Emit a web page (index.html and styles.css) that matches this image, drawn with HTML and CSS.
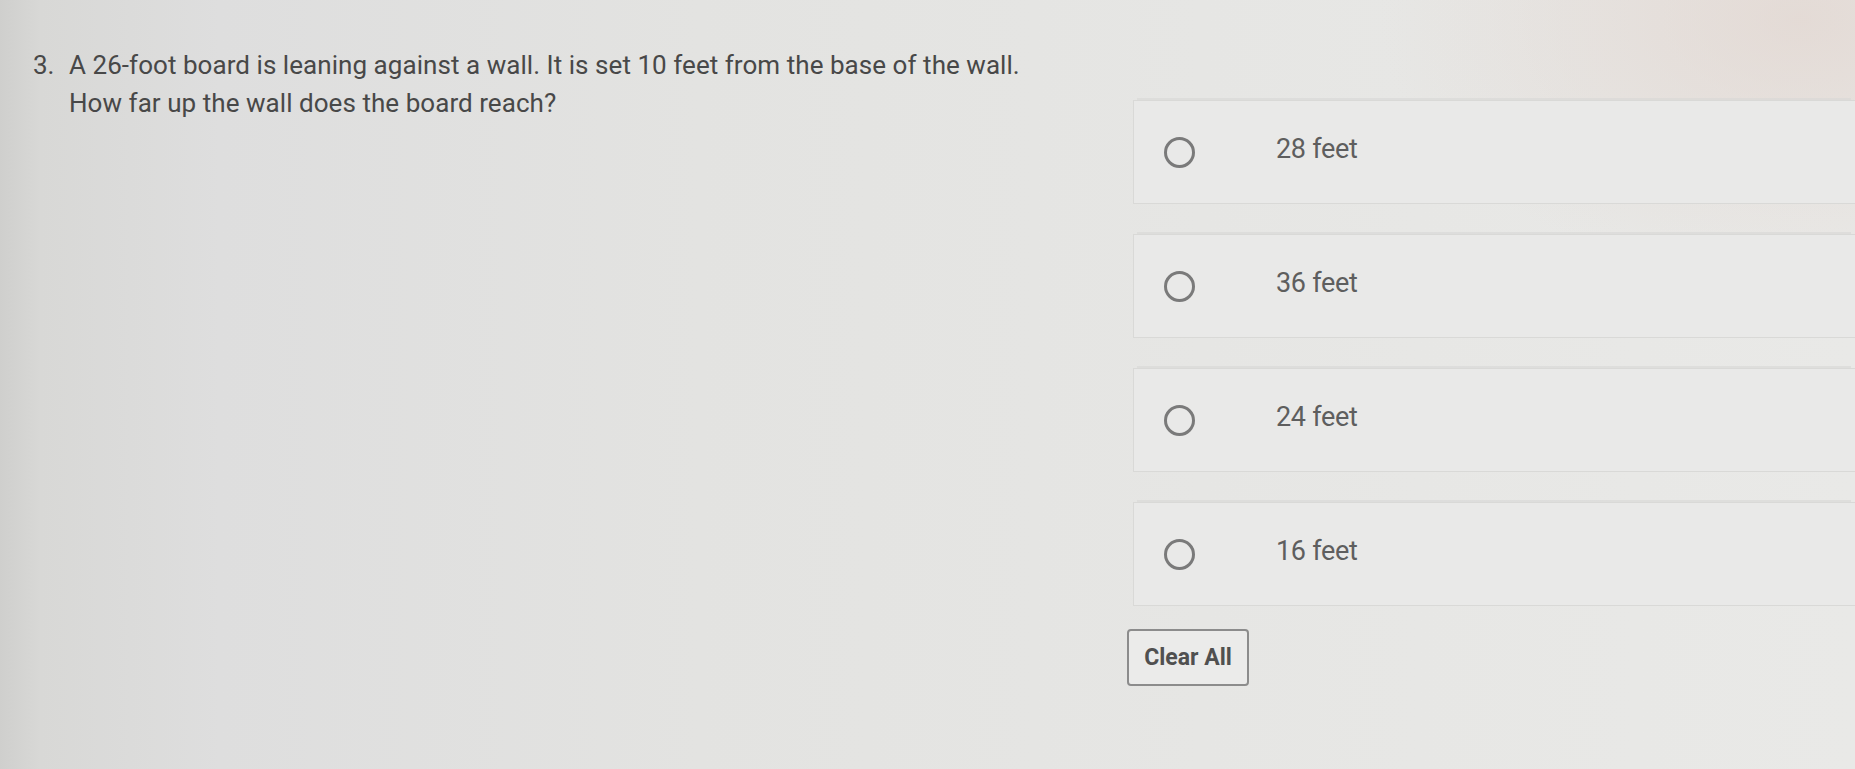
FILE: index.html
```html
<!DOCTYPE html>
<html lang="en">
<head>
<meta charset="utf-8">
<title>Question 3</title>
<link rel="stylesheet" href="styles.css">
</head>
<body>
<main class="page">
  <section class="question">
    <span class="qnum">3.</span>
    <p class="qtext">A 26-foot board is leaning against a wall. It is set 10 feet from the base of the wall.<br>How far up the wall does the board reach?</p>
  </section>
  <section class="answers">
    <label class="option"><span class="radio"></span><span class="otext">28 feet</span></label>
    <label class="option"><span class="radio"></span><span class="otext">36 feet</span></label>
    <label class="option"><span class="radio"></span><span class="otext">24 feet</span></label>
    <label class="option"><span class="radio"></span><span class="otext">16 feet</span></label>
    <button class="clear" type="button">Clear All</button>
  </section>
</main>
</body>
</html>
```

FILE: styles.css
```css
html, body {
  margin: 0;
  height: 100%;
}

body {
  font-family: Roboto, "Liberation Sans", Arial, sans-serif;
  background:
    radial-gradient(ellipse 420px 260px at 1800px 20px, rgba(226, 214, 208, 0.75), rgba(226, 214, 208, 0) 100%),
    linear-gradient(to right, #cfcfcd 0px, #d8d8d6 40px, #dedede 220px, #e3e3e1 700px, #e6e6e4 1200px, #e9e9e7 1855px);
  overflow: hidden;
}

.page {
  display: flex;
  align-items: flex-start;
  padding-top: 46px;
  height: 723px;
}

.question {
  display: flex;
  flex: 0 0 1127px;
  box-sizing: border-box;
  padding-left: 33px;
  color: #484848;
  font-size: 26px;
  line-height: 38px;
}

.qnum {
  flex: 0 0 36px;
}

.qtext {
  margin: 0;
  letter-spacing: 0.05px;
}

.answers {
  flex: 1;
  display: flex;
  flex-direction: column;
  align-items: flex-start;
  gap: 30px;
  margin-top: 54px;
}

.option {
  display: flex;
  align-items: center;
  box-sizing: border-box;
  width: calc(100% - 6px);
  margin-left: 6px;
  height: 104px;
  padding-left: 30px;
  background: #e9e9e8;
  border: 1px solid #d9d9d7;
  border-right: none;
  box-shadow: 0 -6px 0 -4px rgba(215, 215, 213, 0.6);
}

.radio {
  flex: 0 0 auto;
  width: 25px;
  height: 25px;
  border: 3px solid #7a7a7a;
  border-radius: 50%;
  margin-right: 81px;
}

.otext {
  color: #5e5e5e;
  font-size: 27px;
  letter-spacing: -0.3px;
  padding-bottom: 6px;
}

.clear {
  margin-top: -7px;
  width: 122px;
  height: 57px;
  padding: 0;
  font-family: Roboto, "Liberation Sans", Arial, sans-serif;
  font-size: 23px;
  font-weight: 700;
  color: #505050;
  background: #ebebea;
  border: 2px solid #8c8c8c;
  border-radius: 4px;
}
```
